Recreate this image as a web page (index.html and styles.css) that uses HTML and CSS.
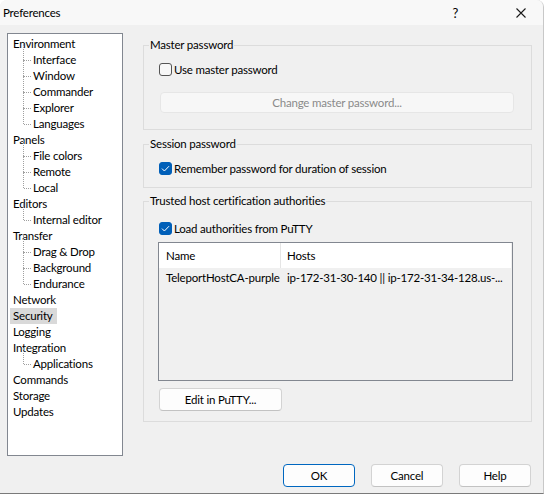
FILE: index.html
```html
<!DOCTYPE html>
<html>
<head>
<meta charset="utf-8">
<link rel="stylesheet" href="styles.css">
</head>
<body>
<div class="window">
  <div class="titlebar">
    <span class="title">Preferences</span>
    <span class="help-q">?</span>
    <svg class="close" width="10" height="10" viewBox="0 0 10 10"><path d="M0.5 0.5 L9.5 9.5 M9.5 0.5 L0.5 9.5" stroke="#1a1a1a" stroke-width="1.1" fill="none"/></svg>
  </div>
  <div class="body">
    <div class="tree">
      <ul class="roots">
        <li><span class="lbl">Environment</span>
          <ul class="kids">
            <li><span class="lbl">Interface</span></li>
            <li><span class="lbl">Window</span></li>
            <li><span class="lbl">Commander</span></li>
            <li><span class="lbl">Explorer</span></li>
            <li><span class="lbl">Languages</span></li>
          </ul>
        </li>
        <li><span class="lbl">Panels</span>
          <ul class="kids">
            <li><span class="lbl">File colors</span></li>
            <li><span class="lbl">Remote</span></li>
            <li><span class="lbl">Local</span></li>
          </ul>
        </li>
        <li><span class="lbl">Editors</span>
          <ul class="kids">
            <li><span class="lbl">Internal editor</span></li>
          </ul>
        </li>
        <li><span class="lbl">Transfer</span>
          <ul class="kids">
            <li><span class="lbl">Drag &amp; Drop</span></li>
            <li><span class="lbl">Background</span></li>
            <li><span class="lbl">Endurance</span></li>
          </ul>
        </li>
        <li><span class="lbl">Network</span></li>
        <li><span class="lbl sel">Security</span></li>
        <li><span class="lbl">Logging</span></li>
        <li><span class="lbl">Integration</span>
          <ul class="kids">
            <li><span class="lbl">Applications</span></li>
          </ul>
        </li>
        <li><span class="lbl">Commands</span></li>
        <li><span class="lbl">Storage</span></li>
        <li><span class="lbl">Updates</span></li>
      </ul>
    </div>
    <div class="main">
      <fieldset class="group g1">
        <legend>Master password</legend>
        <label class="check r1"><span class="box"></span>Use master password</label>
        <div class="btn disabled wide">Change master password...</div>
      </fieldset>
      <fieldset class="group g2">
        <legend>Session password</legend>
        <label class="check r2"><span class="box on"><svg width="9" height="7" viewBox="0 0 9 7"><path d="M1 3.6 L3.4 6 L8 1.2" stroke="#fff" stroke-width="1" fill="none"/></svg></span>Remember password for duration of session</label>
      </fieldset>
      <fieldset class="group g3">
        <legend>Trusted host certification authorities</legend>
        <label class="check r3"><span class="box on"><svg width="9" height="7" viewBox="0 0 9 7"><path d="M1 3.6 L3.4 6 L8 1.2" stroke="#fff" stroke-width="1" fill="none"/></svg></span>Load authorities from PuTTY</label>
        <div class="list">
          <div class="lhead">
            <div class="col c1">Name</div>
            <div class="col c2">Hosts</div>
          </div>
          <div class="lrow">
            <div class="col c1">TeleportHostCA-purple</div>
            <div class="col c2">ip-172-31-30-140 || ip-172-31-34-128.us-...</div>
          </div>
        </div>
        <div class="btn edit">Edit in PuTTY...</div>
      </fieldset>
    </div>
  </div>
  <div class="footer">
    <div class="btn fb default">OK</div>
    <div class="btn fb">Cancel</div>
    <div class="btn fb">Help</div>
  </div>
</div>
</body>
</html>
```
FILE: styles.css
```css
* { box-sizing: border-box; }
html, body { margin: 0; padding: 0; background: #ffffff; }
body {
  font-family: Lato, "Noto Sans", sans-serif;
  font-size: 11.5px;
  letter-spacing: -0.2px;
  color: #000;
}
.window {
  width: 544px;
  height: 494px;
  background: #f0f0f0;
  border-right: 1px solid #c8c8c8;
  border-bottom: 1px solid #7a7a7a;
  border-top-left-radius: 7px;
  border-top-right-radius: 7px;
  overflow: hidden;
  display: flex;
  flex-direction: column;
}
.titlebar {
  height: 25px;
  background: #f8f8f8;
  display: flex;
  align-items: center;
  padding-left: 3px;
  flex: none;
}
.title { line-height: 16px; }
.help-q { margin-left: auto; font-size: 13px; margin-right: 58px; line-height: 16px; }
.close { margin-right: 17px; }
.body {
  display: flex;
  padding: 8px 0 0 7px;
  flex: none;
}
.tree {
  width: 116px;
  height: 423px;
  background: #fff;
  border: 1px solid #828790;
  padding: 2px 0 0 5px;
  flex: none;
}
.tree ul { list-style: none; margin: 0; padding: 0; }
.tree li { line-height: 16px; }
.tree .lbl { display: inline-block; height: 16px; line-height: 16px; white-space: nowrap; }
.tree .kids { padding-left: 20px; }
.tree .kids li { position: relative; }
.tree .kids li::before {
  content: "";
  position: absolute;
  left: -10px;
  top: -8px;
  height: 16px;
  border-left: 1px dotted #a0a0a0;
}
.tree .kids li::after {
  content: "";
  position: absolute;
  left: -9px;
  top: 8px;
  width: 7px;
  border-top: 1px dotted #a0a0a0;
}
.tree .sel { background: #d9d9d9; margin-left: -3px; padding: 0 4px 0 3px; }
.main {
  margin-left: 20px;
  width: 389px;
  display: flex;
  flex-direction: column;
  margin-top: 4px;
}
.group {
  margin: 0;
  padding: 0;
  border: 1px solid #dcdcdc;
  min-inline-size: 0;
  display: flex;
  flex-direction: column;
}
.g2 { margin-top: 6px; }
.g3 { margin-top: 5px; }
.group legend {
  padding: 0 1px;
  margin-left: 5px;
  line-height: 16px;
  height: 16px;
}
.check {
  display: flex;
  align-items: center;
  height: 16px;
  margin-left: 15px;
  white-space: nowrap;
}
.box {
  width: 13px;
  height: 13px;
  border: 1px solid #545454;
  border-radius: 3px;
  background: #f7f7f7;
  margin-right: 2px;
  display: flex;
  align-items: center;
  justify-content: center;
  flex: none;
}
.box.on { background: #005fb8; border-color: #005fb8; }
.r1 { margin-top: 8px; }
.r2 { margin-top: 8px; margin-bottom: 11px; }
.r3 { margin-top: 11px; }
.btn {
  display: flex;
  align-items: center;
  justify-content: center;
  background: #fdfdfd;
  border: 1px solid #d3d3d3;
  border-bottom-color: #c2c2c2;
  border-radius: 4px;
  height: 22px;
}
.btn.disabled {
  background: #f7f7f7;
  border-color: #e6e6e6;
  color: #8a8a8a;
}
.wide {
  margin: 15px 0 16px 16px;
  width: 354px;
  height: 21px;
}
.list {
  margin: 6px 0 0 14px;
  width: 355px;
  height: 139px;
  border: 1px solid #828790;
  background: #f0f0f0;
}
.lhead {
  display: flex;
  height: 25px;
  background: #fff;
  margin-right: 1px;
}
.lhead .c1 { border-right: 1px solid #e5e5e5; }
.lrow { display: flex; height: 18px; }
.col { display: flex; align-items: center; white-space: nowrap; }
.c1 { width: 122px; padding-left: 7px; flex: none; }
.c2 { padding-left: 6px; }
.edit {
  margin: 7px 0 10px 15px;
  width: 123px;
  height: 23px;
}
.footer {
  margin-top: auto;
  display: flex;
  justify-content: flex-end;
  gap: 16px;
  padding: 0 12px 6px 0;
}
.fb { width: 72px; height: 23px; }
.fb.default { border: 1px solid #0067c0; }
```
